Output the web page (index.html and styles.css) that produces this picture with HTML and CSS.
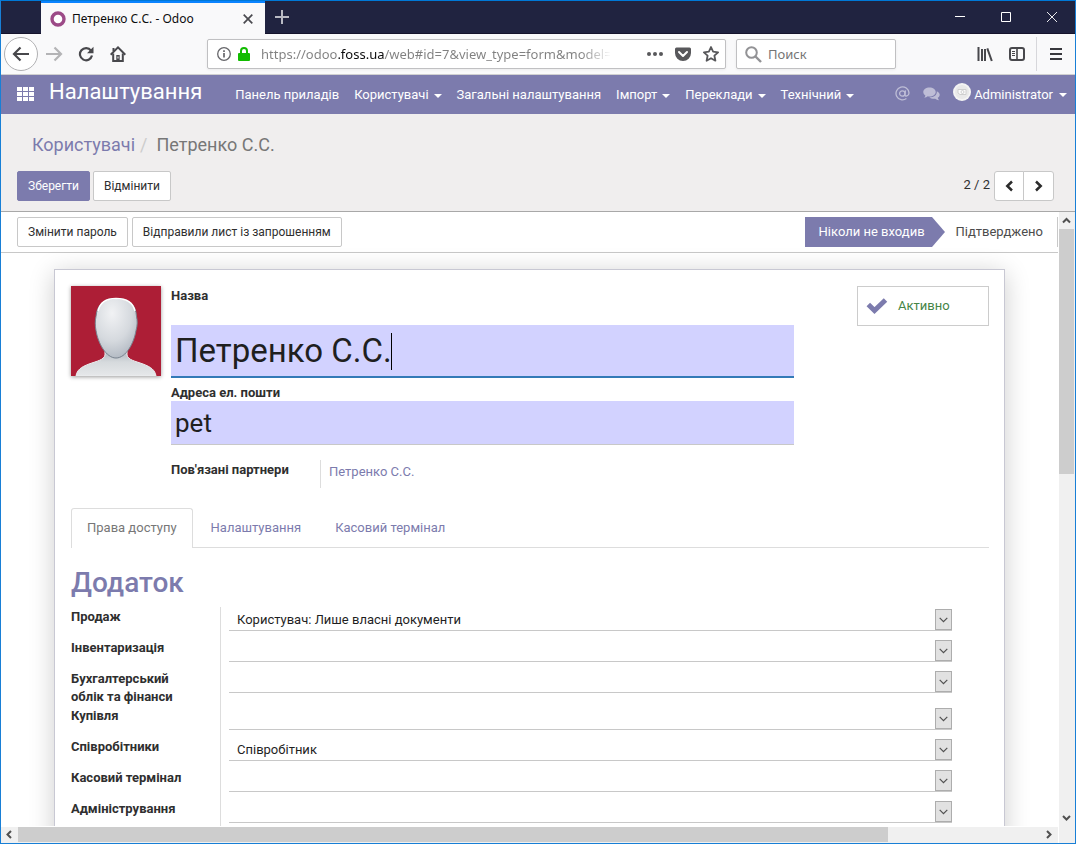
FILE: index.html
```html
<!DOCTYPE html>
<html lang="uk">
<head>
<meta charset="utf-8">
<title>Петренко С.С. - Odoo</title>
<link rel="stylesheet" href="styles.css">
</head>
<body>
<div class="window">
  <header class="titlebar">
    <div class="tab">
      <svg class="favicon" width="16" height="16" viewBox="0 0 16 16"><circle cx="8" cy="8" r="6" fill="#fff" stroke="#9c4a87" stroke-width="3.4"/></svg>
      <span class="tab-title">Петренко С.С. - Odoo</span>
      <button class="icon-btn tab-close" aria-label="Закрити вкладку"><svg width="10" height="10" viewBox="0 0 10 10"><path d="M.7.7l8.6 8.6M9.300.7L.7 9.300" stroke="#4a4a4f" stroke-width="1.7" fill="none"/></svg></button>
    </div>
    <button class="icon-btn new-tab" aria-label="Нова вкладка"><svg width="14" height="14" viewBox="0 0 14 14"><path d="M7 0v14M0 7h14" stroke="#b9bac4" stroke-width="2"/></svg></button>
    <div class="window-controls">
      <button class="icon-btn" aria-label="Згорнути"><svg width="10" height="10" viewBox="0 0 10 10"><path d="M0 4.500h10" stroke="#fff"/></svg></button>
      <button class="icon-btn" aria-label="Розгорнути"><svg width="10" height="10" viewBox="0 0 10 10"><path d="M.5.5h9v9h-9z" stroke="#fff" fill="none"/></svg></button>
      <button class="icon-btn" aria-label="Закрити"><svg width="10" height="10" viewBox="0 0 10 10"><path d="M0 0l10 10M10 0L0 10" stroke="#fff" stroke-width=".9"/></svg></button>
    </div>
  </header>

  <div class="toolbar">
    <div class="nav-buttons">
      <button class="icon-btn back" aria-label="Назад"><svg width="18" height="16" viewBox="0 0 18 16"><path d="M17 8H2M8.500 1.500L2 8l6.500 6.500" fill="none" stroke="#48484c" stroke-width="2.200"/></svg></button>
      <button class="icon-btn" aria-label="Вперед"><svg width="18" height="16" viewBox="0 0 18 16"><path d="M1 8h15M9.500 1.500L16 8l-6.500 6.500" fill="none" stroke="#b4b4b6" stroke-width="2.200"/></svg></button>
      <button class="icon-btn" aria-label="Оновити"><svg width="16" height="16" viewBox="0 0 16 16"><path d="M13 4.600A6.100 6.100 0 1 0 14 9.600" fill="none" stroke="#48484c" stroke-width="2.200"/><path d="M15.500.8v6.400H9z" fill="#48484c"/></svg></button>
      <button class="icon-btn" aria-label="Додому"><svg width="16" height="16" viewBox="0 0 16 16"><path d="M.7 8.700L8 1.400l7.300 7.300" fill="none" stroke="#48484c" stroke-width="2"/><path d="M3.200 7.500V15h9.600V7.500M3.500 2v3" fill="none" stroke="#48484c" stroke-width="2"/><path d="M6.300 9h3.400v6H6.300z" fill="#48484c"/><path d="M8 10.500v2" stroke="#fff"/></svg></button>
    </div>
    <div class="field-box url-box">
      <svg width="14" height="14" viewBox="0 0 14 14"><circle cx="7" cy="7" r="6.300" fill="none" stroke="#66666a" stroke-width="1.300"/><path d="M7 6v4.500M7 3.300v1.600" stroke="#66666a" stroke-width="1.700"/></svg>
      <svg class="lock" width="12" height="14" viewBox="0 0 12 14"><path d="M3 7V4a3 3 0 0 1 6 0v3" fill="none" stroke="#12bc00" stroke-width="2"/><rect y="6" width="12" height="8" rx="1" fill="#12bc00"/></svg>
      <input class="url-input" type="text" aria-label="Адреса" value="https://odoo.foss.ua/web#id=7&amp;view_type=form&amp;model=res.users">
      <svg width="16" height="16" viewBox="0 0 16 16" fill="#58585b"><circle cx="2" cy="8" r="2"/><circle cx="8" cy="8" r="2"/><circle cx="14" cy="8" r="2"/></svg>
      <svg width="16" height="16" viewBox="0 0 16 16"><path d="M1.500 1.500h13A1.500 1.500 0 0 1 16 3v4a8 8 0 0 1-16 0V3a1.500 1.500 0 0 1 1.500-1.500z" fill="#58585b"/><path d="M4 6l4 4 4-4" fill="none" stroke="#fff" stroke-width="2" stroke-linecap="round" stroke-linejoin="round"/></svg>
      <svg width="16" height="16" viewBox="0 0 16 16"><path d="M8 1l2.100 4.700 5 .6-3.700 3.400 1 5L8 12.200l-4.400 2.500 1-5L.9 6.300l5-.6z" fill="none" stroke="#58585b" stroke-width="1.800" stroke-linejoin="round"/></svg>
    </div>
    <div class="field-box search-box">
      <svg width="17" height="17" viewBox="0 0 17 17"><circle cx="6.500" cy="6.500" r="5.300" fill="none" stroke="#929295" stroke-width="2"/><path d="M10.500 10.500l5.500 5.500" stroke="#929295" stroke-width="2.400"/></svg>
      <input class="search-input" type="text" aria-label="Поиск" placeholder="Поиск">
    </div>
    <div class="tool-buttons">
      <button class="icon-btn" aria-label="Бібліотека"><svg width="16" height="16" viewBox="0 0 16 16"><path d="M1.500 1v14M5 3v12M8 3v12M10.300 2.300L14.800 15" stroke="#48484c" stroke-width="2"/></svg></button>
      <button class="icon-btn" aria-label="Бічна панель"><svg width="16" height="16" viewBox="0 0 16 16"><rect x="1" y="2" width="14" height="12" rx="2" fill="none" stroke="#48484c" stroke-width="2"/><path d="M8 2v12" stroke="#48484c" stroke-width="1.600"/><path d="M3 5.500h3M3 7.500h3M3 9.500h3" stroke="#48484c"/></svg></button>
    </div>
    <button class="icon-btn menu-btn" aria-label="Меню"><svg width="12" height="12" viewBox="0 0 12 12"><path d="M0 1h12M0 6h12M0 11h12" stroke="#38383d" stroke-width="2"/></svg></button>
  </div>

  <nav class="navbar">
    <a class="apps" href="#" aria-label="Додатки"><svg width="17" height="14" viewBox="0 0 17 14" fill="#fff"><path d="M0 0h5v4H0zM6 0h5v4H6zM12 0h5v4h-5zM0 5h5v4H0zM6 5h5v4H6zM12 5h5v4h-5zM0 10h5v4H0zM6 10h5v4H6zM12 10h5v4h-5z"/></svg></a>
    <a class="brand" href="#">Налаштування</a>
    <div class="menu">
      <a href="#">Панель приладів</a>
      <a class="drop" href="#">Користувачі</a>
      <a href="#">Загальні налаштування</a>
      <a class="drop" href="#">Імпорт</a>
      <a class="drop" href="#">Переклади</a>
      <a class="drop" href="#">Технічний</a>
    </div>
    <div class="systray">
      <a class="faded" href="#" aria-label="Згадування"><svg width="15" height="15" viewBox="0 0 15 15" fill="none" stroke="#fff" stroke-width="1.300"><circle cx="7.300" cy="7.500" r="2.700"/><path d="M10.500 4.300L9.900 8.700c-.1 2.200 4.100 1.600 4.100-1.800A6.500 6.500 0 1 0 11.400 12.600"/></svg></a>
      <a class="faded" href="#" aria-label="Розмови"><svg width="17" height="14" viewBox="0 0 17 14" fill="#fff"><path d="M6.500.5C10 .5 12.700 2.500 12.700 5S10 9.500 6.500 9.500c-.6 0-1.200 0-1.700-.2-.9.800-2.200 1.300-3.600 1.500.7-.7 1.100-1.400 1.200-2.300C1 7.600.3 6.400.3 5 .3 2.500 3 .5 6.500.5z"/><path d="M13.800 4.300c1.700.7 2.900 2 2.900 3.500 0 1.200-.8 2.300-2 3 .2.900.7 1.600 1.400 2.400-1.500-.1-2.900-.6-3.800-1.500-2.300.3-4.600-.2-6-1.200 4.500 0 8-2.400 7.500-6.200z"/></svg></a>
      <a class="user drop" href="#"><svg width="18" height="18" viewBox="0 0 18 18"><circle cx="9" cy="9" r="9" fill="#f4f4f4"/><circle cx="9" cy="9" r="7" fill="#e9e9e9"/><path d="M5 6.500h8v5H7L5 10z" fill="#fbfbfb" stroke="#cfcfcf"/><circle cx="9.500" cy="9" r="1.500" fill="none" stroke="#cfcfcf"/></svg>Administrator</a>
    </div>
  </nav>

  <section class="control-panel">
    <ol class="breadcrumb">
      <li><a href="#">Користувачі</a></li>
      <li class="current">Петренко С.С.</li>
    </ol>
    <div class="cp-row">
      <div class="btn-row tight">
        <button class="btn primary">Зберегти</button>
        <button class="btn">Відмінити</button>
      </div>
      <div class="pager">
        <span>2 / 2</span>
        <div class="pager-btns">
          <button aria-label="Попередній"><svg width="9" height="12" viewBox="0 0 9 12"><path d="M7 1.500L2.300 6 7 10.500" fill="none" stroke="#2b2b2b" stroke-width="2.500"/></svg></button>
          <button aria-label="Наступний"><svg width="9" height="12" viewBox="0 0 9 12"><path d="M2 1.500L6.700 6 2 10.500" fill="none" stroke="#2b2b2b" stroke-width="2.500"/></svg></button>
        </div>
      </div>
    </div>
  </section>

  <div class="viewport">
    <main class="content">
      <div class="statusbar">
        <div class="btn-row">
          <button class="btn">Змінити пароль</button>
          <button class="btn">Відправили лист із запрошенням</button>
        </div>
        <div class="stages">
          <span class="stage active">Ніколи не входив</span>
          <svg class="stage-arrow" width="13" height="30" viewBox="0 0 13 30"><path d="M0 0l13 15L0 30z" fill="#7c7bad"/></svg>
          <span class="stage">Підтверджено</span>
        </div>
      </div>

      <div class="sheet">
        <div class="head">
          <svg class="avatar" width="90" height="90" viewBox="0 0 90 90">
            <defs>
              <radialGradient id="face" cx=".4" cy=".25" r=".85"><stop offset="0" stop-color="#f1f2f4"/><stop offset=".55" stop-color="#d5d9de"/><stop offset="1" stop-color="#a9b1bb"/></radialGradient>
              <linearGradient id="bust" x1="0" y1="0" x2="0" y2="1"><stop offset="0" stop-color="#a3abb5"/><stop offset=".5" stop-color="#d6dadd"/><stop offset="1" stop-color="#e6e8ea"/></linearGradient>
            </defs>
            <rect width="90" height="90" fill="#ad1e36"/>
            <path d="M34 62v7c-1 5-8 6-16 9C10 81 6 84 5 90h80c-1-6-5-9-13-12-8-3-15-4-16-9v-7z" fill="url(#bust)" stroke="#eceef0"/>
            <path d="M45 12.500c13 0 20 6 20.500 18 1 4 1 9-.5 14C63 57 55 72 45 72S27 57 25 44.500c-1-5-1-10 0-14C26 18.500 33 12.500 45 12.500z" fill="url(#face)" stroke="#79838f"/>
            <path d="M27 25C29 16 35 12.500 45 12.500S62 16 64 25" fill="none" stroke="#fff" stroke-width="1.500"/>
          </svg>
          <div class="identity">
            <label class="name-label" for="name">Назва</label>
            <div class="name-wrap"><input class="name-input" id="name" type="text" value="Петренко С.С."><span class="caret"></span></div>
            <label class="mail-label" for="mail">Адреса ел. пошти</label>
            <input class="mail-input" id="mail" type="text" value="pet">
            <div class="partner">
              <span class="partner-label">Пов'язані партнери</span>
              <a href="#">Петренко С.С.</a>
            </div>
          </div>
          <button class="stat"><svg width="22" height="18" viewBox="0 0 22 18"><path d="M2.300 7.500L8.500 13.500 19.500 3" fill="none" stroke="#7c7bad" stroke-width="5" stroke-linejoin="miter"/></svg>Активно</button>
        </div>

        <div class="tabs">
          <a class="tab-link selected" href="#">Права доступу</a>
          <a class="tab-link" href="#">Налаштування</a>
          <a class="tab-link" href="#">Касовий термінал</a>
        </div>

        <h2 class="group-title">Додаток</h2>
        <div class="group">
          <div class="row"><label for="f1">Продаж</label><div class="cell"><select id="f1"><option>Користувач: Лише власні документи</option></select><span class="arrow"><svg width="9" height="6" viewBox="0 0 9 6"><path d="M.7.8l3.800 3.800L8.300.8" fill="none" stroke="#505050" stroke-width="1.200"/></svg></span></div></div>
          <div class="row"><label for="f2">Інвентаризація</label><div class="cell"><select id="f2"><option></option></select><span class="arrow"><svg width="9" height="6" viewBox="0 0 9 6"><path d="M.7.8l3.800 3.800L8.300.8" fill="none" stroke="#505050" stroke-width="1.200"/></svg></span></div></div>
          <div class="row"><label for="f3">Бухгалтерський облік та фінанси</label><div class="cell"><select id="f3"><option></option></select><span class="arrow"><svg width="9" height="6" viewBox="0 0 9 6"><path d="M.7.8l3.800 3.800L8.300.8" fill="none" stroke="#505050" stroke-width="1.200"/></svg></span></div></div>
          <div class="row"><label for="f4">Купівля</label><div class="cell"><select id="f4"><option></option></select><span class="arrow"><svg width="9" height="6" viewBox="0 0 9 6"><path d="M.7.8l3.800 3.800L8.300.8" fill="none" stroke="#505050" stroke-width="1.200"/></svg></span></div></div>
          <div class="row"><label for="f5">Співробітники</label><div class="cell"><select id="f5"><option>Співробітник</option></select><span class="arrow"><svg width="9" height="6" viewBox="0 0 9 6"><path d="M.7.8l3.800 3.800L8.300.8" fill="none" stroke="#505050" stroke-width="1.200"/></svg></span></div></div>
          <div class="row"><label for="f6">Касовий термінал</label><div class="cell"><select id="f6"><option></option></select><span class="arrow"><svg width="9" height="6" viewBox="0 0 9 6"><path d="M.7.8l3.800 3.800L8.300.8" fill="none" stroke="#505050" stroke-width="1.200"/></svg></span></div></div>
          <div class="row"><label for="f7">Адміністрування</label><div class="cell"><select id="f7"><option></option></select><span class="arrow"><svg width="9" height="6" viewBox="0 0 9 6"><path d="M.7.8l3.800 3.800L8.300.8" fill="none" stroke="#505050" stroke-width="1.200"/></svg></span></div></div>
        </div>
      </div>
    </main>
    <div class="vscroll">
      <svg width="17" height="17" viewBox="0 0 17 17"><path d="M4 10.500L7.500 7 11 10.500" fill="none" stroke="#505050" stroke-width="2"/></svg>
      <div class="thumb"></div>
      <svg class="end" width="17" height="17" viewBox="0 0 17 17"><path d="M4 7L7.500 10.500 11 7" fill="none" stroke="#505050" stroke-width="2"/></svg>
    </div>
    <div class="hscroll">
      <svg width="17" height="15" viewBox="0 0 17 15"><path d="M10 4L6.500 7.500 10 11" fill="none" stroke="#505050" stroke-width="2"/></svg>
      <div class="track"><div class="thumb"></div></div>
      <svg width="17" height="15" viewBox="0 0 17 15"><path d="M6 4l3.500 3.500L6 11" fill="none" stroke="#505050" stroke-width="2"/></svg>
    </div>
    <div class="corner"></div>
  </div>
</div>
</body>
</html>
```
FILE: styles.css
```css
* { box-sizing: border-box; }
body { margin: 0; font: 13px/18px Roboto, "Liberation Sans", sans-serif; color: #2f2f2f; }
a { color: #7c7bad; text-decoration: none; }
button, input, select { font: inherit; color: inherit; margin: 0; border-radius: 0; }
svg { display: block; flex: none; }

.window { display: flex; flex-direction: column; height: 100vh; border: 1px solid #187fd6; border-top-color: #0078d7; background: #fff; overflow: hidden; }
.icon-btn { display: grid; place-items: center; padding: 0; border: 0; background: none; }

.titlebar { flex: none; display: flex; height: 33px; padding-left: 40px; background: #202340; border-bottom: 1px solid #15132c; }
.tab { display: flex; align-items: center; width: 224px; height: 33px; padding: 0 12px 0 9px; background: #f9f9fa; border-top: 2px solid #0a84ff; font: 12px/18px "Noto Sans", "Open Sans", sans-serif; color: #0c0c0d; }
.tab-title { margin-left: 6px; white-space: nowrap; }
.tab-close { margin-left: auto; }
.new-tab { width: 34px; }
.window-controls { display: flex; margin-left: auto; }
.window-controls .icon-btn { width: 46px; }

.toolbar { flex: none; display: flex; align-items: center; height: 41px; background: #f9f9fa; border-bottom: 1px solid #d0d0d0; }
.nav-buttons { display: flex; align-items: center; margin: 0 73px 0 3px; }
.nav-buttons .icon-btn { width: 32px; height: 32px; }
.nav-buttons .back { width: 34px; height: 34px; border: 1px solid #b1b1b3; border-radius: 50%; background: #fff; }
.field-box { display: flex; align-items: center; height: 30px; background: #fff; border: 1px solid #c0c0c2; border-radius: 2px; box-shadow: 0 1px 3px rgba(0, 0, 0, .06); font: 13px/20px "Noto Sans", "Open Sans", sans-serif; }
.url-box { flex: 1; gap: 12px; min-width: 0; padding: 0 6px 0 9px; }
.url-box .lock { margin-left: -5px; }
.url-input { flex: 1; min-width: 0; margin: 0 25px 0 -1px; padding: 0; border: 0; outline: 0; -webkit-text-fill-color: transparent; background: linear-gradient(90deg, #808080 77px, #0c0c0d 77px, #0c0c0d 123px, #808080 123px, #808080 320px, transparent 350px); -webkit-background-clip: text; background-clip: text; }
.search-box { width: 160px; margin-left: 10px; padding-left: 8px; gap: 6px; }
.search-input { width: 100%; min-width: 0; padding: 0; border: 0; outline: 0; background: none; }
.search-input::placeholder { color: #757575; opacity: 1; }
.tool-buttons { display: flex; margin-left: 73px; padding-right: 3px; border-right: 1px solid #d7d7db; }
.tool-buttons .icon-btn { width: 32px; height: 34px; }
.menu-btn { width: 38px; height: 34px; }

.navbar { flex: none; display: flex; align-items: center; height: 39px; padding: 0 8px 0 16px; background: #7c7bad; }
.navbar a { color: #fff; white-space: nowrap; }
.apps { margin-bottom: 2px; }
.brand { margin: 0 0 6px 15px; font-size: 22px; line-height: 26px; }
.menu { display: flex; gap: 15px; margin-left: 33px; }
.drop::after { content: ""; display: inline-block; margin-left: 5px; vertical-align: 1px; border: 4px solid transparent; border-top-color: #fff; border-bottom: 0; }
.systray { display: flex; align-items: center; gap: 13px; margin-left: auto; }
.faded { margin-bottom: 2px; opacity: .5; }
.user { display: flex; align-items: center; gap: 3px; }
.user svg { margin-bottom: 5px; }
.user::after { margin-left: 3px; }

.control-panel { flex: none; padding: 20px 21px 10px 16px; background: #f0eeee; border-bottom: 1px solid #a8a8a8; }
.breadcrumb { display: flex; margin: 0 0 15px; padding: 0 0 0 15px; list-style: none; font-size: 18px; line-height: 22px; }
.breadcrumb .current { color: #777; }
.breadcrumb .current::before { content: "/"; padding: 0 9px 0 5px; color: #ccc; }
.cp-row { display: flex; justify-content: space-between; }
.btn-row { display: flex; gap: 4px; }
.btn-row.tight { gap: 3px; }
.btn { height: 30px; padding: 0 10px; border: 1px solid #c8c8c8; border-radius: 2px; background: #fff; font-size: 12px; line-height: 18px; white-space: nowrap; }
.btn.primary { background: #7c7bad; border-color: #7c7bad; color: #fff; }
.pager { display: flex; gap: 4px; }
.pager span { line-height: 28px; }
.pager-btns { display: flex; }
.pager-btns button { display: grid; place-items: center; width: 30px; height: 30px; padding: 0; border: 1px solid #c8c8c8; border-radius: 3px 0 0 3px; background: #fff; }
.pager-btns button + button { width: 31px; margin-left: -1px; border-radius: 0 3px 3px 0; }

.viewport { flex: 1; min-height: 0; display: grid; grid-template: minmax(0, 1fr) 17px / minmax(0, 1fr) 16px; }
.content { overflow: hidden; }
.statusbar { display: flex; justify-content: space-between; margin-right: 1px; padding: 5px 0 5px 16px; border-bottom: 1px solid #c8c8c8; }
.stages { display: flex; border-right: 1px solid #c8c8c8; white-space: nowrap; }
.stage { padding: 0 14px 0 11px; line-height: 30px; color: #4c4c4c; }
.stage.active { padding: 0 7px 0 14px; background: #7c7bad; color: #fff; }

.sheet { margin: 16px 54px 0 53px; padding: 16px 15px 16px 16px; border: 1px solid #c8c8d3; background: #fff; box-shadow: 0 4px 24px rgba(0, 0, 0, .2); }
.head { display: flex; align-items: flex-start; }
.avatar { box-shadow: 0 1px 4px rgba(0, 0, 0, .4); }
.identity { flex: 1; min-width: 0; margin: 0 63px 0 10px; }
.identity label, .partner-label, .row label { font-weight: 700; }
.identity label { display: block; }
.name-label { padding-top: 1px; margin-bottom: 20px; }
.name-wrap { position: relative; }
.name-input, .mail-input { display: block; width: 100%; padding: 0 4px; border: 0; outline: 0; background: #d2d2ff; color: #1f1f1f; }
.name-input { height: 53px; border-bottom: 2px solid #337ab7; font-size: 33px; }
.caret { position: absolute; left: 220px; top: 8px; width: 1px; height: 37px; background: #000; }
.mail-label { padding-top: 6px; line-height: 17px; }
.mail-input { height: 44px; border-bottom: 1px solid #c8c8c8; font-size: 26px; }
.partner { display: grid; grid-template-columns: 149px 1fr; margin-top: 15px; }
.partner-label { padding-top: 1px; }
.partner a { padding: 3px 0 7px 8px; border-left: 1px solid #ddd; }
.stat { display: flex; align-items: center; gap: 10px; width: 132px; height: 40px; padding: 0 8px; border: 1px solid #ccc; background: #fff; color: #468547; }

.tabs { display: flex; gap: 2px; margin-top: 20px; border-bottom: 1px solid #ddd; }
.tab-link { padding: 10px 15px; border: 1px solid transparent; border-bottom: 0; }
.tab-link.selected { margin-bottom: -1px; padding-bottom: 11px; border-color: #ddd; border-radius: 3px 3px 0 0; background: #fff; color: #777; }

.group-title { margin: 19px 0 8px; font-size: 28px; line-height: 32px; font-weight: 500; color: #7c7bad; }
.group { margin-right: 37px; }
.row { display: grid; grid-template-columns: 149px minmax(0, 1fr); min-height: 31px; }
.row label { padding: 1px 30px 0 0; }
.cell { display: grid; align-items: end; align-content: start; padding-left: 8px; border-left: 1px solid #ddd; }
.cell > * { grid-area: 1 / 1; }
.cell select { width: 100%; height: 24px; padding: 2px 24px 0 8px; border: 0; border-bottom: 1px solid #c8c8c8; appearance: none; background: none; color: #1f1f1f; }
.arrow { justify-self: end; display: grid; place-items: center; width: 17px; height: 21px; margin-bottom: 1px; border: 1px solid #adadad; background: #e1e1e1; pointer-events: none; }

.vscroll { display: flex; flex-direction: column; background: #f0f0f0; }
.vscroll .thumb { height: 245px; margin-right: 1px; background: #cdcdcd; }
.vscroll .end { margin-top: auto; }
.hscroll { display: flex; margin: 1px 1px 0 0; background: #f0f0f0; }
.track { flex: 1; }
.hscroll .thumb { width: 85%; height: 15px; background: #cdcdcd; }
.corner { background: #f0f0f0; }
```
